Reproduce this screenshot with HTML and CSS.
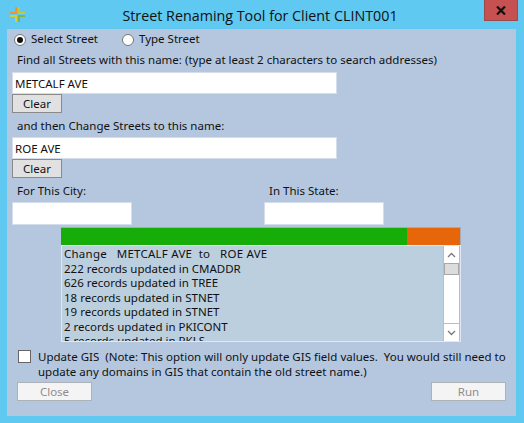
FILE: index.html
```html
<!DOCTYPE html>
<html lang="en">
<head>
  <meta charset="UTF-8">
  <title>Street Renaming Tool</title>
  <link rel="stylesheet" href="styles.css">
</head>
<body>
  <div class="window">
    <div class="titlebar">
      <svg class="app-icon" width="17" height="17" viewBox="0 0 17 17" fill="none" stroke-width="2">
        <path d="M7 1v6H1" stroke="#ea9535"/>
        <path d="M10 1v6h6" stroke="#c6c644"/>
        <path d="M7 16v-6H1" stroke="#d6cb45"/>
        <path d="M10 16v-6h6" stroke="#7fb548"/>
      </svg>
      <div class="title">Street Renaming Tool for Client CLINT001</div>
      <div class="close-x">
        <svg width="10" height="9" viewBox="0 0 10 9" stroke="#111" stroke-width="2.2"><path d="M1 0.5l8 8M9 0.5l-8 8"/></svg>
      </div>
    </div>
    <div class="client">
      <div class="radios">
        <label class="radio-item first"><span class="radio checked"></span><span class="radio-text">Select Street</span></label>
        <label class="radio-item"><span class="radio"></span><span class="radio-text">Type Street</span></label>
      </div>
      <div class="label find-label">Find all Streets with this name: (type at least 2 characters to search addresses)</div>
      <div class="textbox wide find-box">METCALF AVE</div>
      <div class="btn clear">Clear</div>
      <div class="label then-label">and then Change Streets to this name:</div>
      <div class="textbox wide">ROE AVE</div>
      <div class="btn clear">Clear</div>
      <div class="place-row">
        <div class="place city">
          <div class="label">For This City:</div>
          <div class="textbox short"></div>
        </div>
        <div class="place">
          <div class="label">In This State:</div>
          <div class="textbox short"></div>
        </div>
      </div>
      <div class="progress"><div class="progress-done"></div></div>
      <div class="listbox">
        <div class="list-lines">
          <div class="list-head">Change &nbsp; METCALF AVE &nbsp;to &nbsp; ROE AVE</div>
          <div>222 records updated in CMADDR</div>
          <div>626 records updated in TREE</div>
          <div>18 records updated in STNET</div>
          <div>19 records updated in STNET</div>
          <div>2 records updated in PKICONT</div>
          <div>5 records updated in PKLS</div>
        </div>
        <div class="scrollbar">
          <div class="arrow">
            <svg width="9" height="6" viewBox="0 0 9 6" fill="none" stroke="#777" stroke-width="1.3"><path d="M1 5l3.5-3.5L8 5"/></svg>
          </div>
          <div class="thumb"></div>
          <div class="track"></div>
          <div class="arrow">
            <svg width="9" height="6" viewBox="0 0 9 6" fill="none" stroke="#777" stroke-width="1.3"><path d="M1 1l3.5 3.5L8 1"/></svg>
          </div>
        </div>
      </div>
      <div class="gis-row">
        <span class="checkbox"></span>
        <div class="gis-text">Update GIS &nbsp;(Note: This option will only update GIS field values. &nbsp;You would still need to<br>update any domains in GIS that contain the old street name.)</div>
      </div>
      <div class="actions">
        <div class="btn disabled">Close</div>
        <div class="btn disabled">Run</div>
      </div>
    </div>
  </div>
</body>
</html>
```

FILE: styles.css
```css
* {
  box-sizing: border-box;
}
body {
  margin: 0;
  background: #5fc9f1;
  font-family: "Noto Sans", sans-serif;
  font-size: 11.5px;
  color: #111;
}
.window {
  width: 524px;
  height: 423px;
  padding-left: 7px;
}
.titlebar {
  display: flex;
  height: 29px;
}
.app-icon {
  margin: 6px 0 0 2px;
  flex: none;
}
.title {
  width: 448px;
  padding-top: 6px;
  margin-left: 10px;
  text-align: center;
  font-family: "Open Sans", sans-serif;
  font-size: 14.3px;
  line-height: 19px;
}
.close-x {
  display: flex;
  align-items: center;
  justify-content: center;
  width: 34px;
  height: 21px;
  background: #c75050;
  border: 1px solid #9a4a4a;
  border-top: 0;
}
.client {
  width: 509px;
  height: 387px;
  background: #b4c7df;
  padding: 3px 0 0 5px;
  line-height: 14px;
}
.radios {
  display: flex;
  height: 15px;
  padding-left: 2px;
}
.radio-item {
  display: flex;
  align-items: center;
  gap: 5px;
}
.radio-item.first {
  width: 108px;
}
.radio-text {
  margin-top: -2px;
}
.radio {
  width: 12px;
  height: 12px;
  border-radius: 50%;
  background: #fff;
  border: 1px solid #777;
  display: flex;
  align-items: center;
  justify-content: center;
}
.radio.checked::after {
  content: "";
  width: 6px;
  height: 6px;
  border-radius: 50%;
  background: #111;
}
.label {
  padding-left: 5px;
}
.find-label {
  margin-top: 6px;
}
.then-label {
  margin-top: 6px;
}
.textbox {
  height: 22px;
  background: #fff;
  border: 1px solid #d5ddea;
  padding: 0 2px;
  line-height: 22px;
}
.wide {
  width: 325px;
  margin-top: 4px;
}
.wide.find-box {
  margin-top: 5px;
}
.short {
  width: 120px;
  margin-top: 4px;
  height: 23px;
}
.btn {
  display: flex;
  align-items: center;
  justify-content: center;
  height: 19px;
  background: #e1e1e1;
  border: 1px solid #8a8a8a;
}
.clear {
  width: 50px;
}
.place-row {
  display: flex;
  margin-top: 6px;
}
.place.city {
  width: 252px;
}
.progress {
  width: 400px;
  height: 18px;
  margin: 2px 0 0 49px;
  background: #e8660a;
  border: 1px solid #a9a9b0;
  border-width: 1px 1px 0 0;
}
.progress-done {
  width: 346px;
  height: 100%;
  background: #17ad08;
}
.listbox {
  display: flex;
  width: 400px;
  height: 97px;
  margin-left: 49px;
  background: #bccfdf;
  border: 1px solid #e2e8f1;
  overflow: hidden;
}
.list-lines {
  flex: 1;
  padding: 1px 0 0 2px;
  line-height: 14.5px;
  overflow: hidden;
}
.list-head {
  letter-spacing: 0.25px;
}
.scrollbar {
  display: flex;
  flex-direction: column;
  width: 17px;
  background: #fff;
  border: 1px solid #bdbdbd;
  border-width: 0 1px 0 1px;
}
.arrow {
  display: flex;
  align-items: center;
  justify-content: center;
  height: 17px;
  flex: none;
}
.thumb {
  height: 12px;
  background: #dcdcdc;
  border: 1px solid #a8a8a8;
  flex: none;
}
.track {
  flex: 1;
  border-bottom: 1px solid #bdbdbd;
}
.gis-row {
  display: flex;
  gap: 7px;
  margin: 7px 0 0 6px;
}
.checkbox {
  width: 13px;
  height: 13px;
  margin-top: 1px;
  background: #fff;
  border: 1px solid #666;
  flex: none;
}
.gis-text {
  line-height: 15px;
  white-space: nowrap;
}
.actions {
  display: flex;
  justify-content: space-between;
  width: 489px;
  margin: 3px 0 0 5px;
}
.btn.disabled {
  width: 75px;
  background: #f4f4f4;
  border-color: #adb2b8;
  color: #8d8d8d;
}
```
